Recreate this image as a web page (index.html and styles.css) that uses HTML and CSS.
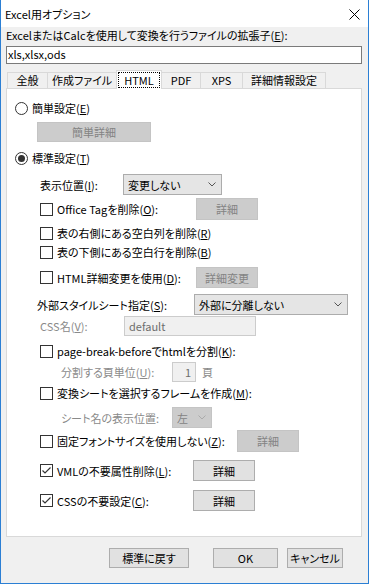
FILE: index.html
```html
<!DOCTYPE html>
<html lang="ja">

<head>
  <meta charset="UTF-8" />
  <title>Excel用オプション</title>
  <link rel="stylesheet" href="styles.css">
</head>

<body>
  <div class="window">
    <div class="titlebar">
      <span class="title">Excel用オプション</span>
      <svg class="close" width="11" height="11" viewBox="0 0 11 11">
        <path d="M0.5 0.5 L10.5 10.5 M10.5 0.5 L0.5 10.5" stroke="#000" stroke-width="1" fill="none" />
      </svg>
    </div>

    <div class="content">
      <div class="ext-label">ExcelまたはCalcを使用して変換を行うファイルの拡張子(<u>E</u>):</div>
      <div class="textbox">xls,xlsx,ods</div>

      <div class="tabs">
        <div class="tab w-general">全般</div>
        <div class="tab w-make">作成ファイル</div>
        <div class="tab active w-html"><span class="focus">HTML</span></div>
        <div class="tab w-pdf">PDF</div>
        <div class="tab w-xps">XPS</div>
        <div class="tab w-detail">詳細情報設定</div>
      </div>

      <div class="panel">
        <!-- 簡単設定 -->
        <div class="row">
          <svg class="radio" width="13" height="13" viewBox="0 0 13 13">
            <circle cx="6.5" cy="6.5" r="6" stroke="#333" fill="#fff" />
          </svg>
          <span>簡単設定(<u>E</u>)</span>
        </div>
        <div class="btn off btn-simple mt5">簡単詳細</div>

        <!-- 標準設定 -->
        <div class="row mt7">
          <svg class="radio" width="13" height="13" viewBox="0 0 13 13">
            <circle cx="6.5" cy="6.5" r="6" stroke="#333" fill="#fff" />
            <circle cx="6.5" cy="6.5" r="3.5" fill="#333" />
          </svg>
          <span>標準設定(<u>T</u>)</span>
        </div>

        <div class="std">
          <div class="row mt7">
            <span class="lbl w83">表示位置(<u>I</u>):</span>
            <div class="select sel-pos">
              <span>変更しない</span>
              <svg width="8" height="5" viewBox="0 0 8 5"><polyline points="0.5,0.5 4,4 7.5,0.5" stroke="#555" fill="none" /></svg>
            </div>
          </div>

          <div class="row mt3">
            <div class="chk w156">
              <svg class="box" width="13" height="13" viewBox="0 0 13 13"><rect x="0.5" y="0.5" width="12" height="12" stroke="#333" fill="#fff" /></svg>
              <span>Office Tagを削除(<u>O</u>):</span>
            </div>
            <div class="btn off btn-small h22">詳細</div>
          </div>

          <div class="row mt4">
            <div class="chk">
              <svg class="box" width="13" height="13" viewBox="0 0 13 13"><rect x="0.5" y="0.5" width="12" height="12" stroke="#333" fill="#fff" /></svg>
              <span>表の右側にある空白列を削除(<u>R</u>)</span>
            </div>
          </div>

          <div class="row mt1">
            <div class="chk">
              <svg class="box" width="13" height="13" viewBox="0 0 13 13"><rect x="0.5" y="0.5" width="12" height="12" stroke="#333" fill="#fff" /></svg>
              <span>表の下側にある空白行を削除(<u>B</u>)</span>
            </div>
          </div>

          <div class="row mt6">
            <div class="chk w156">
              <svg class="box" width="13" height="13" viewBox="0 0 13 13"><rect x="0.5" y="0.5" width="12" height="12" stroke="#333" fill="#fff" /></svg>
              <span>HTML詳細変更を使用(<u>D</u>):</span>
            </div>
            <div class="btn off btn-small">詳細変更</div>
          </div>

          <div class="row mt6">
            <span class="lbl w157 shift-left">外部スタイルシート指定(<u>S</u>):</span>
            <div class="select sel-css">
              <span>外部に分離しない</span>
              <svg width="8" height="5" viewBox="0 0 8 5"><polyline points="0.5,0.5 4,4 7.5,0.5" stroke="#555" fill="none" /></svg>
            </div>
          </div>

          <div class="row mt1">
            <span class="lbl gray w84">CSS名(<u>V</u>):</span>
            <div class="input off in-css">default</div>
          </div>

          <div class="row mt6">
            <div class="chk">
              <svg class="box" width="13" height="13" viewBox="0 0 13 13"><rect x="0.5" y="0.5" width="12" height="12" stroke="#333" fill="#fff" /></svg>
              <span>page-break-beforeでhtmlを分割(<u>K</u>):</span>
            </div>
          </div>

          <div class="row mt2 sub">
            <span class="lbl gray w111">分割する頁単位(<u>U</u>):</span>
            <div class="input off in-page">1</div>
            <span class="gray unit">頁</span>
          </div>

          <div class="row mt2">
            <div class="chk">
              <svg class="box" width="13" height="13" viewBox="0 0 13 13"><rect x="0.5" y="0.5" width="12" height="12" stroke="#333" fill="#fff" /></svg>
              <span>変換シートを選択するフレームを作成(<u>M</u>):</span>
            </div>
          </div>

          <div class="row mt5 sub">
            <span class="lbl gray w111">シート名の表示位置:</span>
            <div class="select off sel-side">
              <span>左</span>
              <svg width="8" height="5" viewBox="0 0 8 5"><polyline points="0.5,0.5 4,4 7.5,0.5" stroke="#aaa" fill="none" /></svg>
            </div>
          </div>

          <div class="row mt2">
            <div class="chk w197">
              <svg class="box" width="13" height="13" viewBox="0 0 13 13"><rect x="0.5" y="0.5" width="12" height="12" stroke="#333" fill="#fff" /></svg>
              <span>固定フォントサイズを使用しない(<u>Z</u>):</span>
            </div>
            <div class="btn off btn-small h22">詳細</div>
          </div>

          <div class="row mt8">
            <div class="chk w153">
              <svg class="box" width="13" height="13" viewBox="0 0 13 13"><rect x="0.5" y="0.5" width="12" height="12" stroke="#333" fill="#fff" /><polyline points="2.5,6.5 5,9 10.5,3.5" stroke="#333" stroke-width="1.2" fill="none" /></svg>
              <span>VMLの不要属性削除(<u>L</u>):</span>
            </div>
            <div class="btn btn-small">詳細</div>
          </div>

          <div class="row mt9">
            <div class="chk w153">
              <svg class="box" width="13" height="13" viewBox="0 0 13 13"><rect x="0.5" y="0.5" width="12" height="12" stroke="#333" fill="#fff" /><polyline points="2.5,6.5 5,9 10.5,3.5" stroke="#333" stroke-width="1.2" fill="none" /></svg>
              <span>CSSの不要設定(<u>C</u>):</span>
            </div>
            <div class="btn btn-small">詳細</div>
          </div>
        </div>
      </div>

      <div class="footer">
        <div class="btn btn-reset">標準に戻す</div>
        <div class="btn btn-ok">OK</div>
        <div class="btn btn-cancel">キャンセル</div>
      </div>
    </div>
  </div>
</body>

</html>
```

FILE: styles.css
```css
body {
  margin: 0;
  font-family: "Noto Sans CJK JP", "Noto Sans", sans-serif;
  font-size: 11px;
  color: #000;
  font-feature-settings: "palt";
  white-space: nowrap;
}

u {
  text-underline-offset: 1px;
}

.window {
  width: 369px;
  height: 584px;
  box-sizing: border-box;
  border: 1px solid #2b7fd4;
  border-top: none;
  background-color: #f0f0f0;
}

.titlebar {
  height: 27px;
  background-color: #fff;
  display: flex;
  align-items: center;
  justify-content: space-between;
  padding: 0 8px 0 4px;
}

.close {
  margin-top: 1px;
}

.content {
  padding: 0 6px 0 5px;
}

.ext-label {
  height: 17px;
  line-height: 17px;
}

.textbox {
  margin-top: 2px;
  height: 18px;
  box-sizing: border-box;
  border: 1px solid #7a7a7a;
  background-color: #fff;
  padding-left: 1px;
  line-height: 15px;
}

/* tabs */
.tabs {
  display: flex;
  align-items: flex-end;
  height: 19px;
  margin-top: 6px;
  margin-bottom: -1px;
  padding-left: 1px;
  position: relative;
  z-index: 1;
}

.tab {
  height: 16px;
  box-sizing: border-box;
  margin-bottom: 1px;
  border: 1px solid #d9d9d9;
  border-bottom: none;
  background-color: #f0f0f0;
  text-align: center;
  line-height: 15px;
}

.tab + .tab {
  margin-left: -1px;
}

.tab.active {
  height: 19px;
  margin-bottom: 0;
  background-color: #fff;
  position: relative;
  z-index: 2;
}

.tab .focus {
  display: block;
  margin: 1px 1px 0;
  height: 16px;
  box-sizing: border-box;
  border: 1px dotted #000;
  line-height: 14px;
}

.w-general { width: 41px; }
.w-make { width: 70px; }
.w-html { width: 46px; }
.w-pdf { width: 40px; }
.w-xps { width: 43px; }
.w-detail { width: 84px; }

/* panel */
.panel {
  height: 449px;
  box-sizing: border-box;
  border: 1px solid #d9d9d9;
  background-color: #fff;
  padding: 10px 0 0 8px;
}

.row {
  display: flex;
  align-items: center;
  min-height: 18px;
}

.radio {
  margin-right: 4px;
  flex-shrink: 0;
}

.std {
  padding-left: 25px;
}

.sub {
  padding-left: 21px;
}

.chk {
  display: flex;
  align-items: center;
  flex-shrink: 0;
}

.box {
  margin-right: 4px;
  flex-shrink: 0;
}

.lbl {
  flex-shrink: 0;
}

.gray {
  color: #8a8a8a;
}

.shift-left {
  margin-left: -3px;
}

.w83 { width: 83px; }
.w84 { width: 84px; }
.w111 { width: 111px; }
.w153 { width: 153px; }
.w156 { width: 156px; }
.w157 { width: 157px; }
.w197 { width: 197px; }

.mt1 { margin-top: 1px; }
.mt2 { margin-top: 2px; }
.mt3 { margin-top: 3px; }
.mt4 { margin-top: 4px; }
.mt5 { margin-top: 5px; }
.mt6 { margin-top: 6px; }
.mt7 { margin-top: 7px; }
.mt8 { margin-top: 8px; }
.mt9 { margin-top: 9px; }

/* controls */
.btn {
  height: 21px;
  box-sizing: border-box;
  border: 1px solid #adadad;
  background-color: #e1e1e1;
  display: flex;
  align-items: center;
  justify-content: center;
  flex-shrink: 0;
}

.btn.off {
  background-color: #cccccc;
  border-color: #c4c4c4;
  color: #838383;
}

.btn-simple {
  margin-left: 22px;
  width: 114px;
  height: 20px;
}

.btn-small {
  width: 62px;
}

.h22 {
  height: 22px;
}

.select {
  height: 21px;
  box-sizing: border-box;
  border: 1px solid #acacac;
  background-color: #e5e5e5;
  display: flex;
  align-items: center;
  justify-content: space-between;
  padding: 0 5px 0 4px;
  flex-shrink: 0;
}

.select.off {
  background-color: #cccccc;
  border-color: #c4c4c4;
  color: #838383;
}

.sel-pos { width: 99px; }
.sel-css { width: 154px; }
.sel-side { width: 40px; }

.input {
  height: 20px;
  box-sizing: border-box;
  border: 1px solid #cccccc;
  background-color: #f0f0f0;
  color: #6d6d6d;
  padding: 0 4px;
  line-height: 18px;
  flex-shrink: 0;
}

.in-css { width: 132px; }

.in-page {
  width: 24px;
  text-align: right;
}

.unit {
  margin-left: 6px;
}

/* footer */
.footer {
  display: flex;
  justify-content: flex-end;
  margin-top: 11px;
  padding-right: 19px;
}

.footer .btn {
  height: 20px;
}

.btn-reset { width: 80px; }

.btn-ok {
  width: 65px;
  margin-left: 24px;
}

.btn-cancel {
  width: 56px;
  margin-left: 9px;
}
```
